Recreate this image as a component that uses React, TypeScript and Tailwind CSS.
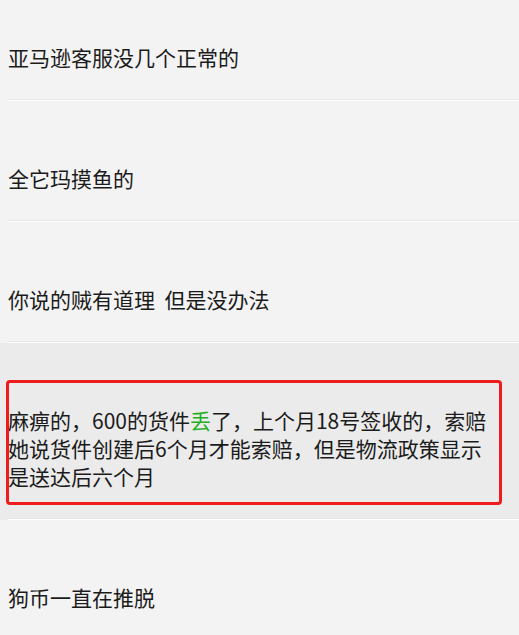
import React from 'react';

const rows: { id: number; text: React.ReactNode; active?: boolean }[] = [
  { id: 1, text: '亚马逊客服没几个正常的' },
  { id: 2, text: '全它玛摸鱼的' },
  { id: 3, text: '你说的贼有道理  但是没办法' },
  {
    id: 4,
    active: true,
    text: (
      <>
        麻痹的，600的货件<span className="text-[#22b022]">丢</span>了，上个月18号签收的，索赔她说货件创建后6个月才能索赔，但是物流政策显示是送达后六个月
      </>
    ),
  },
  { id: 5, text: '狗币一直在推脱' },
];

const App: React.FC = () => {
  return (
    <div className="w-[519px] h-[635px] overflow-hidden bg-[#f3f3f3] font-['Noto_Sans_CJK_SC','Microsoft_YaHei',sans-serif] text-[#1b1b1b]">
      <div className="-mt-[20px] flex flex-col">
        {rows.map((r, i) => (
          <div key={r.id} className={`relative ${r.active ? 'bg-[#ebebeb]' : ''}`}>
            <div className="pl-2 pr-8 pt-[63px] pb-[28px] text-[21px] leading-[28px] whitespace-pre-wrap">
              {r.text}
            </div>
            {/* annotation box around the complaint */}
            {r.active && (
              <div className="absolute left-[6px] right-[17px] top-[37px] bottom-[15px] border-[3px] border-[#ee1c1c] rounded-[4px] pointer-events-none" />
            )}
            {i < rows.length - 1 && (
              <div className="ml-2 h-[2px] border-t border-[#e6e6e6] bg-white" />
            )}
          </div>
        ))}
      </div>
    </div>
  );
};

export default App;
